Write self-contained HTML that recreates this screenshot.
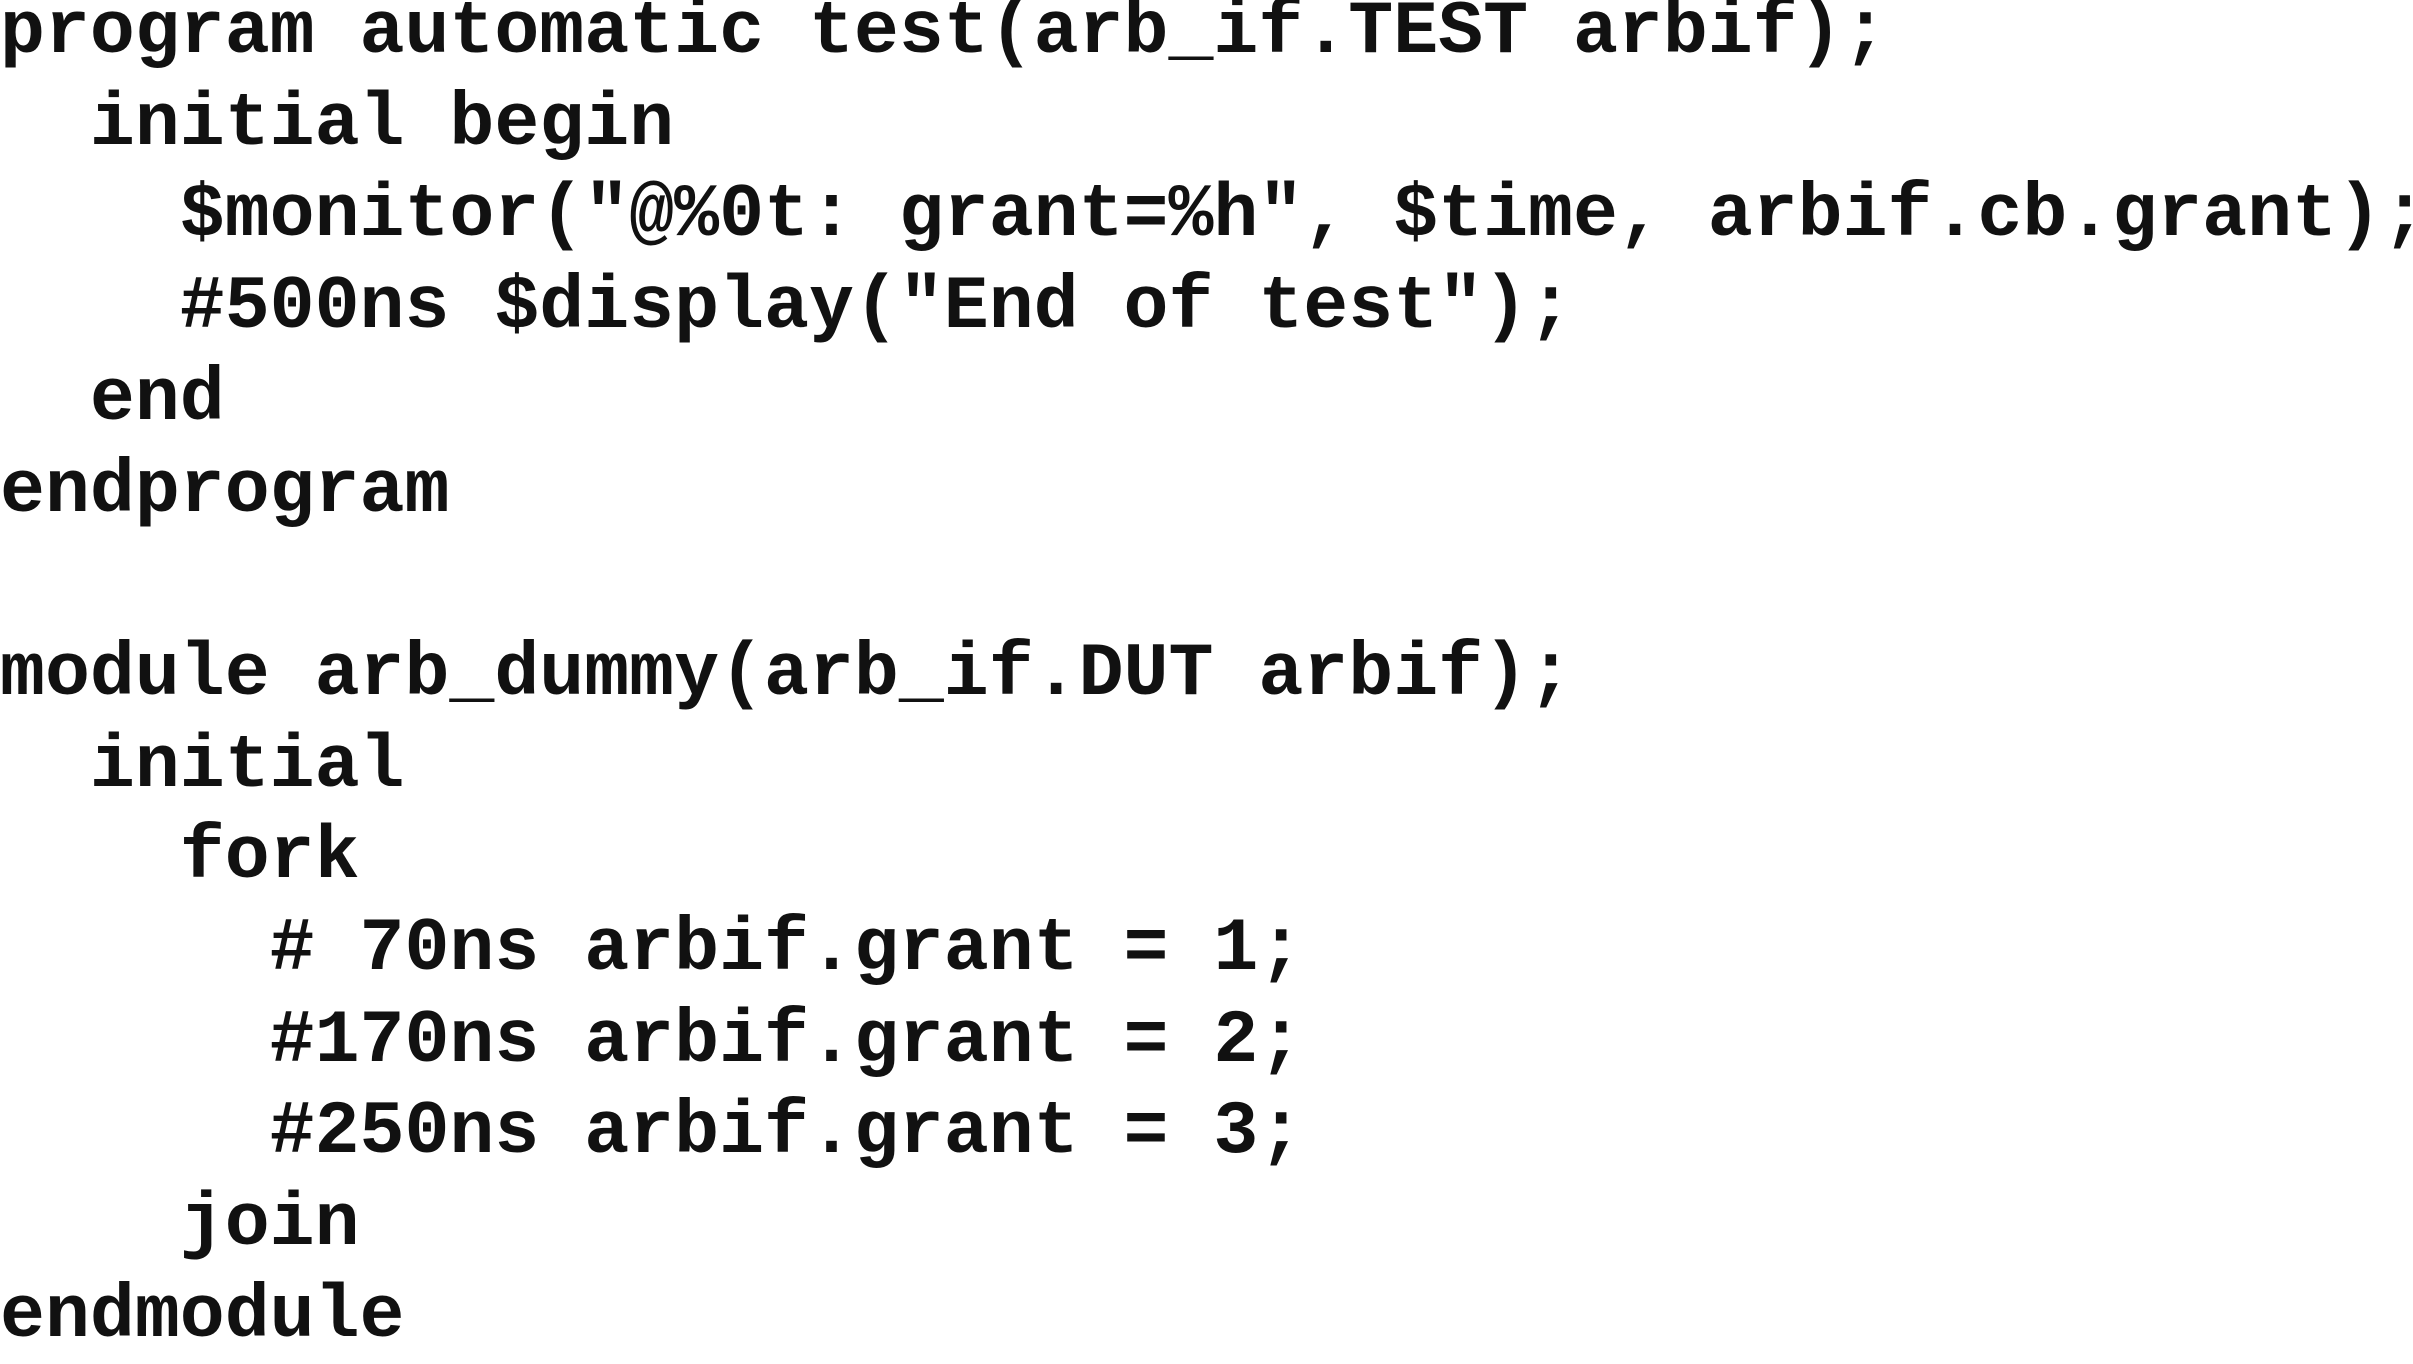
<!DOCTYPE html>
<html><head><meta charset="utf-8"><style>
html,body{margin:0;padding:0;background:#fff;width:2413px;height:1332px;overflow:hidden}
pre{margin:0;position:absolute;left:0;top:-12px;font-family:"Liberation Mono",monospace;font-weight:bold;font-size:74.9px;line-height:91.7px;color:#111;white-space:pre}
</style></head><body>
<pre>program automatic test(arb_if.TEST arbif);
  initial begin
    $monitor("@%0t: grant=%h", $time, arbif.cb.grant);
    #500ns $display("End of test");
  end
endprogram

module arb_dummy(arb_if.DUT arbif);
  initial
    fork
      # 70ns arbif.grant = 1;
      #170ns arbif.grant = 2;
      #250ns arbif.grant = 3;
    join
endmodule</pre>
</body></html>
